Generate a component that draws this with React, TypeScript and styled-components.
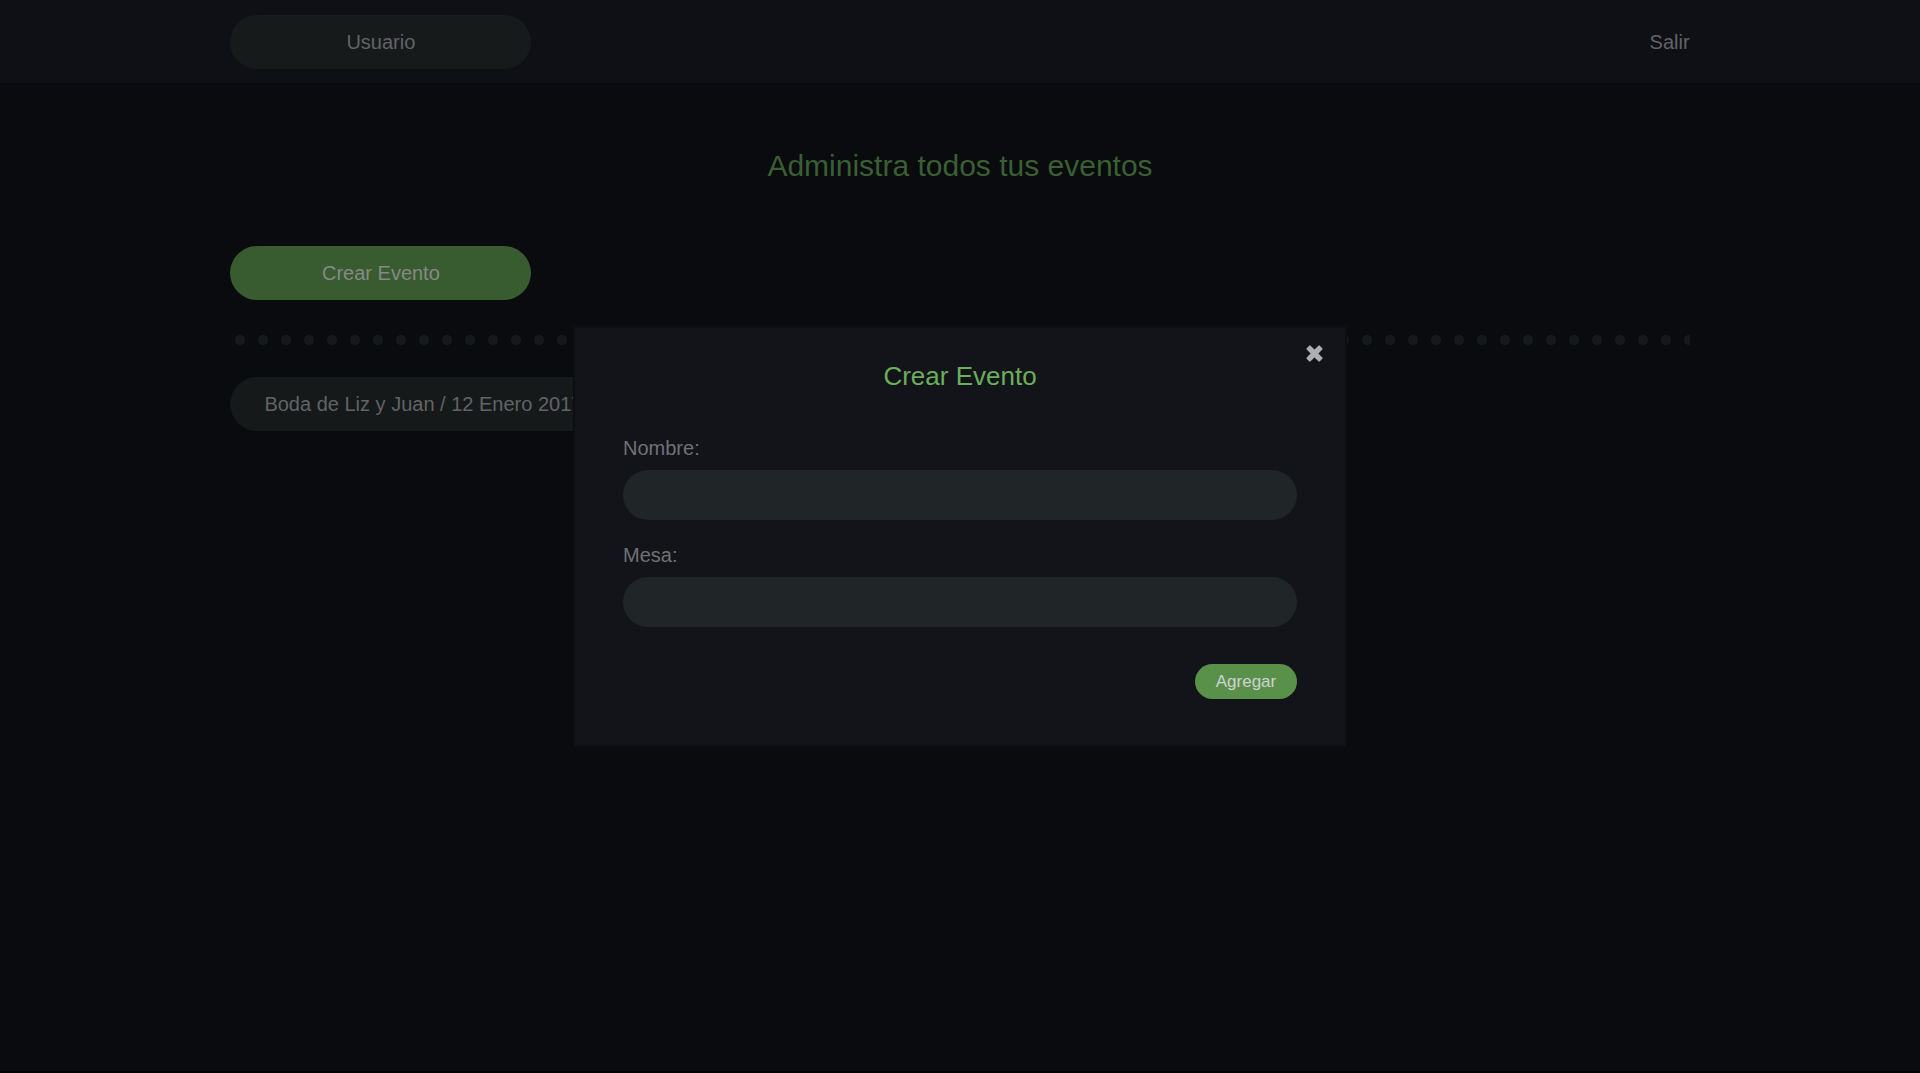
import React, { useState } from "react";
import styled, { createGlobalStyle, css } from "styled-components";

const GlobalStyle = createGlobalStyle`
  * { box-sizing: border-box; }
  html { background: #000; }
  body {
    margin: 0;
    background: #000;
    color: #626365;
    font: 20px/24px "Liberation Sans", Arial, Helvetica, sans-serif;
  }
  button, input { font: inherit; color: inherit; border: 0; margin: 0; }
`;

const Page = styled.div`
  display: flex;
  flex-direction: column;
  min-height: calc(100vh - 2px);
  background: #090b0e;
`;

const Header = styled.header`
  display: flex;
  justify-content: space-between;
  align-items: center;
  padding: 15px 12% 14px;
  background: #0f1015;
`;

const pill = css`
  width: 301px;
  height: 54px;
  padding: 0;
  border-radius: 27px;
  cursor: pointer;
`;

const UserButton = styled.button`
  ${pill}
  background: #161a1b;
`;

const CreateButton = styled.button`
  ${pill}
  background: #395b30;
  color: #868986;
`;

const ExitLink = styled.a`
  color: inherit;
  text-decoration: none;
`;

const Main = styled.main`
  display: flex;
  flex-direction: column;
  align-items: flex-start;
  padding: 65px 12% 0;
`;

const PageTitle = styled.h1`
  align-self: center;
  margin: 0 0 62px;
  font-size: 30px;
  line-height: 36px;
  font-weight: 400;
  color: #395f32;
`;

const DottedRule = styled.hr`
  width: 100%;
  height: 10px;
  margin: 35px 0 32px;
  border: 0;
  background: radial-gradient(circle at 10px 5px, #15191a 5px, transparent 5px) 0 0 / 23px 10px repeat-x;
`;

const EventLink = styled.a`
  display: flex;
  align-items: center;
  height: 54px;
  padding: 0 34px;
  border-radius: 27px;
  background: #15191a;
  color: inherit;
  text-decoration: none;
`;

const Overlay = styled.div`
  position: fixed;
  inset: 0;
  display: flex;
  align-items: center;
  justify-content: center;
`;

const Dialog = styled.section`
  position: relative;
  width: 774px;
  max-width: 100%;
  padding: 32px 48px 46px;
  border: 2px solid #0d0e12;
  background: #131419;
`;

const DialogTitle = styled.h2`
  margin: 0 0 44px;
  font-size: 26px;
  line-height: 32px;
  font-weight: 400;
  text-align: center;
  color: #6bae5b;
`;

const CloseButton = styled.button`
  position: absolute;
  top: 17px;
  right: 22px;
  display: flex;
  padding: 0;
  background: none;
  color: #adaeb0;
  cursor: pointer;
`;

const Form = styled.form`
  display: flex;
  flex-direction: column;
  gap: 23px;
`;

const Field = styled.label`
  display: flex;
  flex-direction: column;
  gap: 10px;
  color: #707174;
`;

const TextInput = styled.input`
  width: 100%;
  height: 50px;
  padding: 0 24px;
  border-radius: 25px;
  background: #202528;
  outline: none;
`;

const SubmitButton = styled.button`
  align-self: flex-end;
  width: 102px;
  height: 35px;
  margin-top: 14px;
  padding: 0;
  border-radius: 18px;
  background: #59914b;
  color: #d0d2d1;
  font-size: 17px;
  cursor: pointer;
`;

const fields = [
  { name: "nombre", label: "Nombre:" },
  { name: "mesa", label: "Mesa:" },
];

function CloseIcon() {
  return (
    <svg width="17" height="17" viewBox="0 0 17 17" fill="currentColor" aria-hidden="true">
      <path d="M3.2.7Q3.9 0 4.6.7L8.5 4.6 12.4.7Q13.1 0 13.8.7L16.3 3.2Q17 3.9 16.3 4.6L12.4 8.5 16.3 12.4Q17 13.1 16.3 13.8L13.8 16.3Q13.1 17 12.4 16.3L8.5 12.4 4.6 16.3Q3.9 17 3.2 16.3L.7 13.8Q0 13.1.7 12.4L4.6 8.5.7 4.6Q0 3.9.7 3.2Z" />
    </svg>
  );
}

export default function App() {
  const [open, setOpen] = useState(true);

  return (
    <>
      <GlobalStyle />
      <Page>
        <Header>
          <UserButton type="button">Usuario</UserButton>
          <ExitLink href="#salir">Salir</ExitLink>
        </Header>
        <Main>
          <PageTitle>Administra todos tus eventos</PageTitle>
          <CreateButton type="button" onClick={() => setOpen(true)}>
            Crear Evento
          </CreateButton>
          <DottedRule />
          <EventLink href="#evento">Boda de Liz y Juan / 12 Enero 2017</EventLink>
        </Main>
      </Page>
      {open && (
        <Overlay>
          <Dialog role="dialog" aria-modal="true" aria-labelledby="dialog-title">
            <CloseButton type="button" aria-label="Cerrar" onClick={() => setOpen(false)}>
              <CloseIcon />
            </CloseButton>
            <DialogTitle id="dialog-title">Crear Evento</DialogTitle>
            <Form onSubmit={(event) => event.preventDefault()}>
              {fields.map((field) => (
                <Field key={field.name} htmlFor={field.name}>
                  {field.label}
                  <TextInput id={field.name} name={field.name} type="text" />
                </Field>
              ))}
              <SubmitButton type="submit">Agregar</SubmitButton>
            </Form>
          </Dialog>
        </Overlay>
      )}
    </>
  );
}
